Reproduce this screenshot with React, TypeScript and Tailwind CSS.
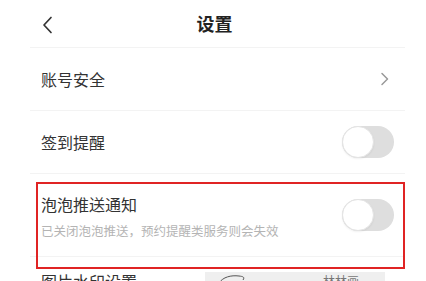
import React from 'react';

const font = { fontFamily: '"Noto Sans CJK SC", "Noto Sans", sans-serif' };

const Toggle: React.FC = () => (
    <div className="relative w-[52px] h-[32px] rounded-full bg-[#dedede] flex-shrink-0">
        <div className="absolute left-0 top-0 w-[32px] h-[32px] rounded-full bg-white border border-[#e4e4e4] shadow-[0_1px_2px_rgba(0,0,0,0.06)]" />
    </div>
);

const Divider: React.FC = () => <div className="ml-[30px] mr-[21px] h-px bg-[#f3f3f3]" />;

const App: React.FC = () => {
    return (
        <div className="relative w-[426px] h-[281px] overflow-hidden bg-white text-[#333]" style={font}>
            {/* Header */}
            <div className="relative h-[47px] flex items-center justify-center">
                <svg className="absolute left-[41px] top-[16px]" width="14" height="18" viewBox="0 0 14 18" fill="none">
                    <path d="M10 1.5 L3 9 L10 16.5" stroke="#333" strokeWidth="1.7" strokeLinecap="round" strokeLinejoin="round" />
                </svg>
                <span className="text-[18px] font-bold text-[#222] leading-none -mt-[1px] ml-[3px]">设置</span>
            </div>
            <Divider />

            {/* 账号安全 */}
            <div className="h-[62px] flex items-center justify-between pl-[41px] pr-[36px]">
                <span className="text-[16px] leading-none">账号安全</span>
                <svg width="10" height="14" viewBox="0 0 10 14" fill="none">
                    <path d="M2 1.5 L7.5 7 L2 12.5" stroke="#999" strokeWidth="1.5" strokeLinecap="round" strokeLinejoin="round" />
                </svg>
            </div>
            <Divider />

            {/* 签到提醒 */}
            <div className="h-[62px] flex items-center justify-between pl-[41px] pr-[32px]">
                <span className="text-[16px] leading-none">签到提醒</span>
                <Toggle />
            </div>
            <Divider />

            {/* 泡泡推送通知 */}
            <div className="h-[82px] flex items-center justify-between pl-[41px] pr-[32px]">
                <div className="flex flex-col gap-[13px] pt-[3px]">
                    <span className="text-[16px] leading-none">泡泡推送通知</span>
                    <span className="text-[12.5px] leading-none text-[#b4b4b4]">已关闭泡泡推送，预约提醒类服务则会失效</span>
                </div>
                <Toggle />
            </div>
            <Divider />

            {/* 图片水印设置 (cut off) */}
            <div className="flex items-start pl-[41px] pt-[16px] gap-[68px]">
                <span className="text-[16px] leading-none">图片水印设置</span>
                <div className="relative w-[180px] h-[20px] -mt-[1px] bg-[#efefef]">
                    <svg className="absolute left-[12px] top-[2px]" width="30" height="10" viewBox="0 0 30 10" fill="none">
                        <path d="M2 9 C6 3, 14 1, 22 2 C26 2.5, 28 3, 26 6" stroke="#555" strokeWidth="1" />
                    </svg>
                    <span className="absolute left-[118px] top-[3px] text-[12px] leading-none text-[#777]">林林画</span>
                </div>
            </div>

            {/* red highlight box */}
            <div className="absolute left-[36px] top-[182px] w-[369px] h-[87px] border-2 border-[#e02424] pointer-events-none" />
        </div>
    );
};

export default App;
